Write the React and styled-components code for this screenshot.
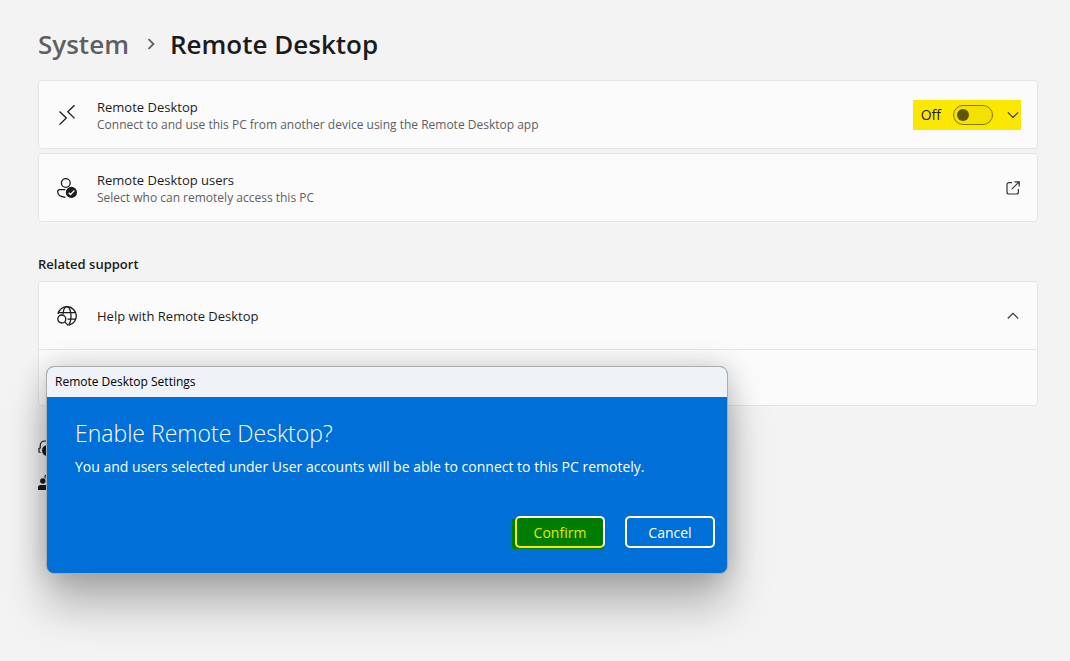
import React from "react";
import styled, { createGlobalStyle } from "styled-components";

const GlobalStyle = createGlobalStyle`
  * { box-sizing: border-box; }
  body {
    margin: 0;
    background: #f3f3f3;
    color: #1b1b1b;
    font-family: "Open Sans", "Noto Sans", sans-serif;
    font-size: 13px;
    line-height: 20px;
  }
  button { font-family: inherit; }
`;

const Page = styled.main`
  position: relative;
  min-height: 100vh;
  padding: 26px 32px 32px 38px;
  overflow: hidden;
`;

const Breadcrumb = styled.nav`
  display: flex;
  align-items: center;
  height: 36px;
  margin-bottom: 18px;
  font-size: 26px;
  line-height: 36px;
  font-weight: 600;
`;

const Crumb = styled.a`
  color: #5f5f5f;
  text-decoration: none;
`;

const CrumbArrow = styled.svg`
  width: 10px;
  height: 12px;
  margin: 0 14px 0 17px;
`;

const PageTitle = styled.h1`
  margin: 0;
  font: inherit;
`;

const CardStack = styled.section`
  display: flex;
  flex-direction: column;
  gap: 4px;
`;

const Card = styled.div`
  background: #fbfbfb;
  border: 1px solid #e5e5e5;
  border-radius: 4px;
`;

const Row = styled.div`
  display: flex;
  align-items: center;
  gap: 20px;
  min-height: 67px;
  padding: 1px 16px 0 18px;
`;

const ExpandedArea = styled.div`
  height: 56px;
  border-top: 1px solid #e5e5e5;
`;

const RowIcon = styled.svg`
  flex: none;
  width: 20px;
  height: 20px;
`;

const RowText = styled.div`
  flex: 1;
`;

const RowTitle = styled.div`
  line-height: 20px;
`;

const RowHint = styled.div`
  color: #606060;
  font-size: 12px;
  line-height: 16px;
`;

const IconButton = styled.button`
  display: grid;
  place-items: center;
  width: 16px;
  height: 20px;
  padding: 0;
  border: 0;
  background: none;
  color: #333;
`;

const SwitchGroup = styled.div`
  display: flex;
  align-items: center;
  height: 30px;
  padding-left: 8px;
  background: #fbe700;
`;

const SwitchLabel = styled.label`
  display: flex;
  align-items: center;
  gap: 12px;
  margin-right: 12px;
  font-size: 14px;
`;

const Switch = styled.input`
  appearance: none;
  display: flex;
  align-items: center;
  width: 40px;
  height: 20px;
  margin: 0;
  padding: 0 3px;
  border: 1px solid #7f7500;
  border-radius: 10px;
  background: #f5e100;

  &::before {
    content: "";
    width: 12px;
    height: 12px;
    border-radius: 50%;
    background: #5d5600;
  }
`;

const SectionTitle = styled.h2`
  margin: 32px 0 7px;
  font-size: 13px;
  line-height: 20px;
  font-weight: 600;
`;

const FooterLinks = styled.div`
  display: flex;
  flex-direction: column;
  align-items: flex-start;
  gap: 14px;
  margin-top: 33px;
`;

const FooterLink = styled.a`
  display: flex;
  height: 20px;
  color: #1b1b1b;
`;

const Dialog = styled.section`
  position: absolute;
  left: 46px;
  top: 366px;
  width: 682px;
  max-width: calc(100% - 64px);
  border: 1px solid #a8adb2;
  border-radius: 8px;
  overflow: hidden;
  background: #0070d8;
  color: #fff;
  box-shadow: 0 32px 44px rgba(0, 0, 0, 0.26), 0 0 28px rgba(0, 0, 0, 0.2);
`;

const DialogBar = styled.header`
  height: 30px;
  padding: 0 8px;
  background: #eff3f7;
  color: #000;
  font-size: 12px;
  line-height: 30px;
`;

const DialogBody = styled.div`
  padding: 19px 12px 25px 28px;
`;

const DialogTitle = styled.h2`
  margin: 0;
  font-size: 23px;
  line-height: 34px;
  font-weight: 300;
`;

const DialogText = styled.p`
  margin: 5px 0 0;
  font-size: 14px;
  line-height: 24px;
`;

const Actions = styled.div`
  display: flex;
  justify-content: flex-end;
  gap: 20px;
  margin-top: 37px;
`;

const DialogButton = styled.button`
  width: 90px;
  height: 32px;
  padding: 1px 0 0;
  border: 2px solid #fff;
  border-color: ${(p) => (p.$marked ? "#fff #fff #fbe700 #fbe700" : "#fff")};
  border-radius: 5px;
  background: ${(p) => (p.$marked ? "#007d00" : "transparent")};
  color: ${(p) => (p.$marked ? "#e4e800" : "#fff")};
  font-size: 14px;
  line-height: 20px;
`;

const Marker = styled.span`
  display: flex;
  background: linear-gradient(#007d00, #007d00) left bottom / 10px 30px no-repeat,
    linear-gradient(#007d00, #007d00) left bottom / calc(100% - 1px) 3px no-repeat;
  padding: 0 0 1px 3px;
  margin: 0 0 -1px -3px;
`;

const Chevron = ({ up }) => (
  <svg width="12" height="8" viewBox="0 0 12 8" fill="none" stroke="currentColor" strokeWidth="1.1">
    <path d={up ? "M.8 6.5 6 1.3l5.2 5.2" : "M.8 1.3 6 6.5l5.2-5.2"} />
  </svg>
);

const RemoteIcon = () => (
  <RowIcon viewBox="0 0 20 20" fill="none" stroke="#1b1b1b" strokeWidth="1.3">
    <path d="M2.5 6.5 9.3 13 2.5 19.6M17.5 0.2 10.8 6.8l6.7 6.6" />
  </RowIcon>
);

const UserCheckIcon = () => (
  <RowIcon viewBox="0 0 20 20" fill="none" stroke="#1b1b1b" strokeWidth="1.3">
    <circle cx="8.8" cy="5" r="4.4" />
    <path d="M8.3 11.7H2.6C1.4 11.7.7 12.5.7 13.6c0 3.5 3.1 5.5 7.8 5.7" />
    <circle cx="14.4" cy="14.4" r="5.6" fill="#1b1b1b" stroke="none" />
    <path d="m11.7 14.7 1.8 1.8 3.9-4" stroke="#fff" />
  </RowIcon>
);

const GlobeSearchIcon = () => (
  <RowIcon viewBox="0 0 20 20" fill="none" stroke="#1b1b1b" strokeWidth="1.3">
    <path d="M.9 8A9.3 9.3 0 1 1 12 19.1M1.5 6.6h17.1M10.5 13.2h8.2" />
    <path d="M6 8C6.4 3.6 8 .7 10 .7c2.300 0 4 4.100 4 9.300 0 4.100-.9 7.200-2.400 8.800" />
    <circle cx="4.800" cy="13" r="4" />
    <path d="m7.700 15.900 3.700 3.700" />
  </RowIcon>
);

const ExternalIcon = () => (
  <svg width="14" height="14" viewBox="0 0 14 14" fill="none" stroke="currentColor" strokeWidth="1.2">
    <path d="M6 1.600H3A2 2 0 0 0 1 3.600v7.400a2 2 0 0 0 2 2h7.400a2 2 0 0 0 2-2V8M8.500.8h4.700v4.700M13 1 5.800 8.200" />
  </svg>
);

const HeadsetIcon = () => (
  <svg width="20" height="20" viewBox="0 0 20 20" fill="none" stroke="currentColor" strokeWidth="1.200">
    <path d="M2.700 13.500 1 13V9.500l1.200-.5V7C2.200 4 4.200 2 7 2s5 2 5 4" />
    <circle cx="9.500" cy="11.500" r="5.500" fill="currentColor" stroke="none" />
  </svg>
);

const FeedbackIcon = () => (
  <svg width="20" height="20" viewBox="0 0 20 20" fill="currentColor">
    <circle cx="4.800" cy="8" r="2.700" />
    <path d="M0 17v-2.500A2.500 2.500 0 0 1 2.500 12h5A2.500 2.500 0 0 1 10 14.500V17z" />
    <path d="M7 5.500V2.500h9V10h-5" fill="none" stroke="currentColor" />
  </svg>
);

export default function App() {
  return (
    <>
      <GlobalStyle />
      <Page>
        <Breadcrumb aria-label="Breadcrumb">
          <Crumb href="#system">System</Crumb>
          <CrumbArrow viewBox="0 0 10 12" fill="none" stroke="#5f5f5f" strokeWidth="1.800">
            <path d="m2.500 1.200 5 4.800-5 4.800" />
          </CrumbArrow>
          <PageTitle>Remote Desktop</PageTitle>
        </Breadcrumb>

        <CardStack>
          <Card>
            <Row>
              <RemoteIcon />
              <RowText>
                <RowTitle>Remote Desktop</RowTitle>
                <RowHint>Connect to and use this PC from another device using the Remote Desktop app</RowHint>
              </RowText>
              <SwitchGroup>
                <SwitchLabel>
                  Off
                  <Switch type="checkbox" role="switch" />
                </SwitchLabel>
                <IconButton type="button" aria-label="Show more settings">
                  <Chevron />
                </IconButton>
              </SwitchGroup>
            </Row>
          </Card>
          <Card>
            <Row>
              <UserCheckIcon />
              <RowText>
                <RowTitle>Remote Desktop users</RowTitle>
                <RowHint>Select who can remotely access this PC</RowHint>
              </RowText>
              <IconButton type="button" aria-label="Open Remote Desktop users">
                <ExternalIcon />
              </IconButton>
            </Row>
          </Card>
        </CardStack>

        <SectionTitle>Related support</SectionTitle>
        <Card>
          <Row>
            <GlobeSearchIcon />
            <RowText>
              <RowTitle>Help with Remote Desktop</RowTitle>
            </RowText>
            <IconButton type="button" aria-label="Collapse help" aria-expanded="true">
              <Chevron up />
            </IconButton>
          </Row>
          <ExpandedArea />
        </Card>

        <FooterLinks>
          <FooterLink href="#help" aria-label="Get help">
            <HeadsetIcon />
          </FooterLink>
          <FooterLink href="#feedback" aria-label="Give feedback">
            <FeedbackIcon />
          </FooterLink>
        </FooterLinks>

        <Dialog role="dialog" aria-labelledby="dialog-title">
          <DialogBar>Remote Desktop Settings</DialogBar>
          <DialogBody>
            <DialogTitle id="dialog-title">Enable Remote Desktop?</DialogTitle>
            <DialogText>
              You and users selected under User accounts will be able to connect to this PC remotely.
            </DialogText>
            <Actions>
              <Marker>
                <DialogButton type="button" $marked>Confirm</DialogButton>
              </Marker>
              <DialogButton type="button">Cancel</DialogButton>
            </Actions>
          </DialogBody>
        </Dialog>
      </Page>
    </>
  );
}
